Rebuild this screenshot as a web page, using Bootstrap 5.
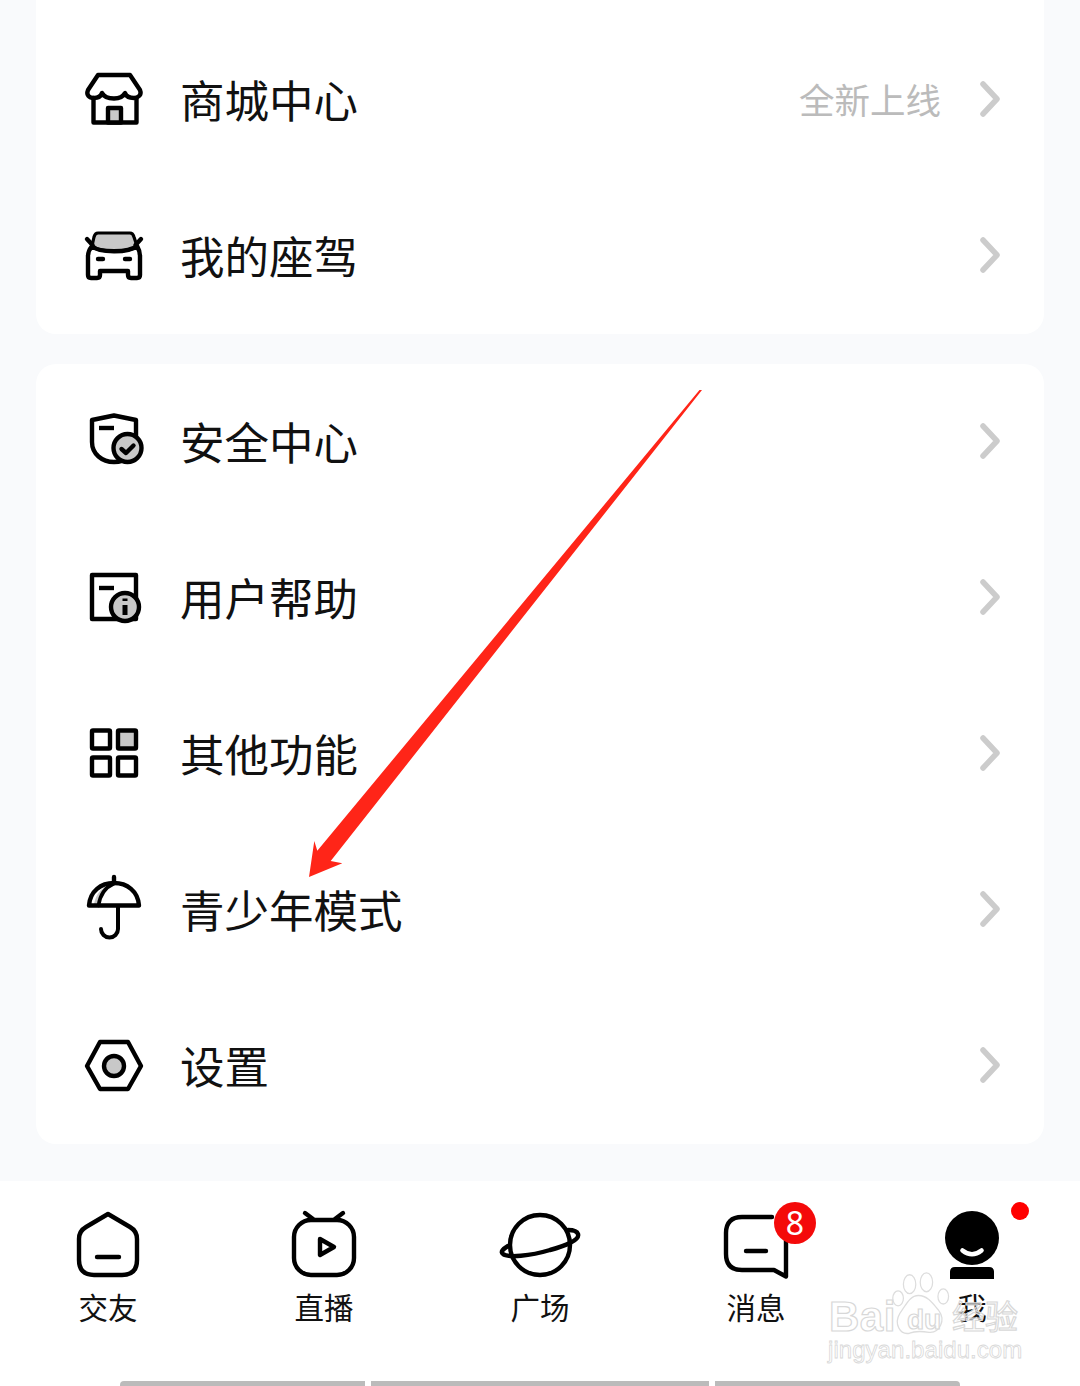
<!DOCTYPE html>
<html lang="zh-CN">
<head>
<meta charset="utf-8">
<title>我</title>
<link href="https://cdn.jsdelivr.net/npm/bootstrap@5.3.0/dist/css/bootstrap.min.css" rel="stylesheet">
<style>
html,body{margin:0;height:1386px;overflow:hidden}
body{background:#f9fafc;font-family:"Liberation Sans","Noto Sans CJK SC",sans-serif;color:#111;position:relative}
.page-col{height:1386px}
.menu-card{margin:0 36px;border-radius:20px;background:#fff}
.card-top{padding-top:22px;border-radius:0 0 20px 20px;margin-bottom:30px}
.menu-row{height:156px;padding:0 42px 0 48px;background:transparent;border:0;display:flex;align-items:center}
.row-icon{width:60px;height:60px;flex:none;margin-right:36px;fill:none;stroke:#000;stroke-width:4.4;stroke-linejoin:round;stroke-linecap:round;overflow:visible}
.row-label{font-size:44.5px;line-height:60px;margin-top:-3px;font-family:"Noto Sans CJK SC",sans-serif;color:#111}
.row-note{font-size:35.5px;line-height:50px;margin-top:-2px;color:#bbb;margin-right:37px;font-family:"Noto Sans CJK SC",sans-serif}
.chev{width:24px;height:36px;flex:none;fill:none;stroke:#ccc;stroke-width:5.5;stroke-linecap:round;stroke-linejoin:round;margin-top:-2px}
.gy{fill:#c8c8c8}
.wh{fill:#fff}
.bk{fill:#000;stroke:none}
.tabbar{margin-top:37px;height:205px;background:#fff;position:relative}
.tab-list{padding-top:27px}
.tab-cell{width:216px}
.tab-icon-wrap{width:90px;height:72px;position:relative}
.tab-icon{width:90px;height:72px;fill:none;stroke:#000;stroke-width:4.4;stroke-linecap:round;stroke-linejoin:round;display:block}
.tab-label{font-size:29.5px;line-height:40px;margin-top:6px;color:#111;font-family:"Noto Sans CJK SC",sans-serif}
.count-dot{position:absolute;left:63px;top:-6px;width:42px;height:42px;background:#f40a0a;color:#fff;font-size:32px;line-height:42px;text-align:center;font-family:"Noto Sans",sans-serif}
.new-dot{position:absolute;left:84px;top:-6px;width:18px;height:18px;background:#f00}
.bar-set{gap:6px;padding:0 120px;margin-top:auto}
.h-bar{height:5px;background:#bbb}
.h-bar:first-child{flex:0 0 245px;border-top-left-radius:4px}
.h-bar:nth-child(2){flex:0 0 338px}
.h-bar:last-child{flex:0 0 245px;border-top-right-radius:4px}
.arrow-ov{position:absolute;left:0;top:0;width:1080px;height:1386px;pointer-events:none}
.wm{position:absolute;color:rgba(255,255,255,.55);-webkit-text-stroke:1.2px #d8d8d8;white-space:nowrap;font-family:"Liberation Sans","Noto Sans CJK SC",sans-serif;line-height:1}
.wm-a{left:829px;top:1296px;font-size:42px;font-weight:700;letter-spacing:.5px}
.wm-b{left:952px;top:1299px;font-size:33px;font-family:"Noto Sans CJK SC",sans-serif}
.wm-c{left:828px;top:1338px;font-size:24px;letter-spacing:.05px;-webkit-text-stroke:.8px #d8d8d8}
.wm-d{left:907px;top:1306px;font-size:28px;font-weight:700}
.paw{position:absolute;left:891px;top:1271px;width:62px;height:66px;fill:rgba(255,255,255,.4);stroke:#ddd;stroke-width:1.4}
</style>
</head>
<body>
<svg width="0" height="0" class="position-absolute">
  <symbol id="chev" viewBox="0 0 24 36"><path d="M5 3 L19 18 L5 33"/></symbol>
</svg>

<div class="page-col d-flex flex-column">
  <div class="card border-0 menu-card card-top">
    <div class="list-group list-group-flush">
      <div class="list-group-item menu-row">
        <svg class="row-icon" viewBox="0 0 60 60">
          <path class="wh" d="M14 5H46L56 20C58 25 54 28 50 28C45 28 42 26 41 23C39 27 35 28.500 30 28.500C25 28.500 20 27 18 23C17 26 14 28 10 28C5 28 2 25 4 20Z"/>
          <path d="M9.500 28V52.500H52.500V28"/>
          <rect class="gy" x="24" y="38" width="13" height="14.500"/>
        </svg>
        <span class="row-label flex-grow-1">商城中心</span>
        <span class="row-note">全新上线</span>
        <svg class="chev"><use href="#chev"/></svg>
      </div>
      <div class="list-group-item menu-row">
        <svg class="row-icon" viewBox="0 0 60 60">
          <path class="gy" d="M14 7H46Q49 7 50 11L53 20C45 27 15 27 8 20L10 11Q11 7 14 7Z" stroke-width="3.200"/>
          <path d="M3 13L8.500 19M57 13L51.500 19"/>
          <path d="M8 20C15 27 45 27 53 20Q56 25 56 30V49Q56 52 53 52H47Q44 52 44 49V45H16V49Q16 52 13 52H7Q4 52 4 49V30Q4 25 8 20Z"/>
          <path d="M14 33H19M41 33H46"/>
        </svg>
        <span class="row-label flex-grow-1">我的座驾</span>
        <svg class="chev"><use href="#chev"/></svg>
      </div>
    </div>
  </div>

  <div class="card border-0 menu-card">
    <div class="list-group list-group-flush">
      <div class="list-group-item menu-row">
        <svg class="row-icon" viewBox="0 0 60 60">
          <path d="M8 8L30 3.500L52 8V30C52 42 42 50 30 50C18 50 8 42 8 30Z"/>
          <path d="M15 16H30" stroke-linecap="butt"/>
          <circle class="gy" cx="43.500" cy="36" r="14"/>
          <path d="M37.500 37L42 41L49.500 33.500"/>
        </svg>
        <span class="row-label flex-grow-1">安全中心</span>
        <svg class="chev"><use href="#chev"/></svg>
      </div>
      <div class="list-group-item menu-row">
        <svg class="row-icon" viewBox="0 0 60 60">
          <rect x="8" y="7" width="44" height="44"/>
          <path d="M15 20H30" stroke-linecap="butt"/>
          <circle class="gy" cx="41" cy="39" r="14"/>
          <path d="M41 37V47" stroke-width="5" stroke-linecap="butt"/>
          <path d="M41 30.500V33" stroke-width="5" stroke-linecap="butt"/>
        </svg>
        <span class="row-label flex-grow-1">用户帮助</span>
        <svg class="chev"><use href="#chev"/></svg>
      </div>
      <div class="list-group-item menu-row">
        <svg class="row-icon" viewBox="0 0 60 60">
          <rect x="8" y="6.500" width="18" height="18" rx="1"/>
          <rect class="gy" x="34" y="6.500" width="18" height="18" rx="1"/>
          <rect x="8" y="33.500" width="18" height="18" rx="1"/>
          <rect x="34" y="33.500" width="18" height="18" rx="1"/>
        </svg>
        <span class="row-label flex-grow-1">其他功能</span>
        <svg class="chev"><use href="#chev"/></svg>
      </div>
      <div class="list-group-item menu-row">
        <svg class="row-icon" viewBox="0 0 60 60">
          <path class="gy" stroke="none" d="M10 24C12 14 18 7 25 5C20 10 17 16 15.500 24Z"/>
          <path d="M30 -3V3"/>
          <path d="M5 25.500C6 11 17 3 30 3C43 3 54 11 55 25.500Z"/>
          <path d="M30 3.500C22 7 16 15 14.500 25.500" stroke-width="3.600"/>
          <path d="M34 26V49A8.500 8.500 0 0 1 17 49" stroke-width="4"/>
        </svg>
        <span class="row-label flex-grow-1">青少年模式</span>
        <svg class="chev"><use href="#chev"/></svg>
      </div>
      <div class="list-group-item menu-row">
        <svg class="row-icon" viewBox="0 0 60 60">
          <path d="M16 6H44L57 30L44 53H16L3 30Z"/>
          <circle class="gy" cx="30" cy="30" r="10"/>
        </svg>
        <span class="row-label flex-grow-1">设置</span>
        <svg class="chev"><use href="#chev"/></svg>
      </div>
    </div>
  </div>

  <nav class="tabbar d-flex flex-column">
    <div class="tab-list d-flex">
      <div class="tab-cell d-flex flex-column align-items-center">
        <div class="tab-icon-wrap">
          <svg class="tab-icon" viewBox="-5 0 90 72">
            <path d="M40 6L62 19Q69 23 69 31V52Q69 67 54 67H26Q11 67 11 52V31Q11 23 18 19Z"/>
            <path d="M29 49H51"/>
          </svg>
        </div>
        <div class="tab-label">交友</div>
      </div>
      <div class="tab-cell d-flex flex-column align-items-center">
        <div class="tab-icon-wrap">
          <svg class="tab-icon" viewBox="-5 0 90 72">
            <rect x="10" y="12" width="60" height="55" rx="17"/>
            <path d="M21 5L29 11M59 5L51 11"/>
            <path d="M36 31L50 39L36 47Z"/>
          </svg>
        </div>
        <div class="tab-label">直播</div>
      </div>
      <div class="tab-cell d-flex flex-column align-items-center">
        <div class="tab-icon-wrap">
          <svg class="tab-icon" viewBox="-5 0 90 72">
            <circle cx="40" cy="37" r="30"/>
            <path d="M8 38C3 41 0 44 3 46C8 50 30 48 50 42C65 38 80 32 78 26C77 23 73 22 68 22"/>
          </svg>
        </div>
        <div class="tab-label">广场</div>
      </div>
      <div class="tab-cell d-flex flex-column align-items-center">
        <div class="tab-icon-wrap">
          <svg class="tab-icon" viewBox="-5 0 90 72">
            <path d="M56 9H26Q10 9 10 25V46Q10 62 26 62H58L70 68.500V30"/>
            <path d="M30 43H50"/>
          </svg>
          <span class="count-dot rounded-circle">8</span>
        </div>
        <div class="tab-label">消息</div>
      </div>
      <div class="tab-cell d-flex flex-column align-items-center">
        <div class="tab-icon-wrap">
          <svg class="tab-icon" viewBox="-5 0 90 72">
            <circle class="bk" cx="40" cy="30" r="27"/>
            <path d="M30.500 42.500Q40 50 49.500 42.500" stroke="#fff" stroke-width="4.600"/>
            <path class="bk" d="M23 59H57Q62 59 62 64V71H18V64Q18 59 23 59Z"/>
          </svg>
          <span class="new-dot rounded-circle"></span>
        </div>
        <div class="tab-label">我</div>
      </div>
    </div>
    <div class="bar-set d-flex">
      <div class="h-bar"></div>
      <div class="h-bar"></div>
      <div class="h-bar"></div>
    </div>
  </nav>
</div>

<svg class="arrow-ov" viewBox="0 0 1080 1386">
  <polygon points="702,390 699.500,390 317.300,850.700 314.300,841 309,877 342.300,863.300 330.700,861" fill="#ff2518"/>
</svg>

<svg class="paw" viewBox="0 0 70 70" preserveAspectRatio="none">
  <ellipse cx="21" cy="14" rx="7" ry="10"/>
  <ellipse cx="40" cy="12" rx="7" ry="10"/>
  <ellipse cx="8" cy="29" rx="6" ry="8"/>
  <ellipse cx="59" cy="27" rx="6" ry="8"/>
  <path d="M31 26C41 26 47 34 54 42C62 52 55 66 43 65C36 64 28 63 21 66C10 68 3 56 10 45C17 36 21 26 31 26Z"/>
</svg>
<span class="wm wm-a">Bai</span>
<span class="wm wm-d">du</span>
<span class="wm wm-b">经验</span>
<span class="wm wm-c">jingyan.baidu.com</span>
</body>
</html>
